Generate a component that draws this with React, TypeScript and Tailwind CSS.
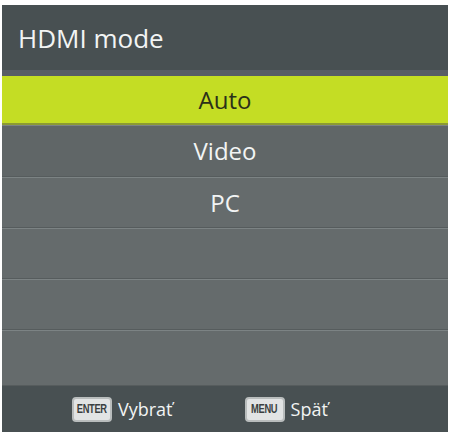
import React from "react";

const options = ["Auto", "Video", "PC", "", "", ""];

function KeyCap({ label }: { label: string }) {
  return (
    <span className="flex h-[25px] w-[40px] items-center justify-center overflow-hidden rounded-[4px] border-2 border-[#b9bdbd] bg-[#e2e4e4]">
      <span className="scale-x-[0.72] text-[13px] font-bold tracking-[-0.5px] text-[#3a3f40] [font-family:'Liberation_Sans',sans-serif]">
        {label}
      </span>
    </span>
  );
}

export default function App() {
  const rowHeights = ["h-[49px]", "h-[52px]", "h-[51px]", "h-[51px]", "h-[51px]", "h-[56px]"];

  return (
    <div className="h-[432px] w-[451px] bg-white pl-[2px] pr-[3px] pt-[5px] [font-family:'Open_Sans',sans-serif]">
      <div className="flex h-full flex-col">
        {/* title bar */}
        <div className="flex h-[65px] items-center bg-[#485052] pl-[16px]">
          <h1 className="text-[26px] leading-none text-[#f2f4f4]">HDMI mode</h1>
        </div>
        <div className="h-[6px] bg-[#575d66]" />

        {/* option list */}
        {options.map((opt, i) =>
          i === 0 ? (
            <div
              key={i}
              className={`flex ${rowHeights[i]} items-center justify-center border-b-2 border-[#8c9a34] bg-[#c4dd24]`}
            >
              <span className="text-[24px] leading-none text-[#2b3019]">{opt}</span>
            </div>
          ) : (
            <div
              key={i}
              className={`flex ${rowHeights[i]} items-center justify-center border-t border-b border-t-[#7c8384] border-b-[#565c5d] ${
                i === 1 ? "bg-[#606667]" : "bg-[#656b6c]"
              }`}
            >
              <span className="text-[24px] leading-none text-[#f2f4f4]">{opt}</span>
            </div>
          )
        )}

        {/* key hints */}
        <div className="flex flex-1 items-center bg-[#485052]">
          <div className="ml-[70px] flex items-center gap-[6px]">
            <KeyCap label="ENTER" />
            <span className="text-[18px] leading-none text-[#f2f4f4]">Vybrať</span>
          </div>
          <div className="ml-[72px] flex items-center gap-[6px]">
            <KeyCap label="MENU" />
            <span className="text-[18px] leading-none text-[#f2f4f4]">Späť</span>
          </div>
        </div>
      </div>
    </div>
  );
}
